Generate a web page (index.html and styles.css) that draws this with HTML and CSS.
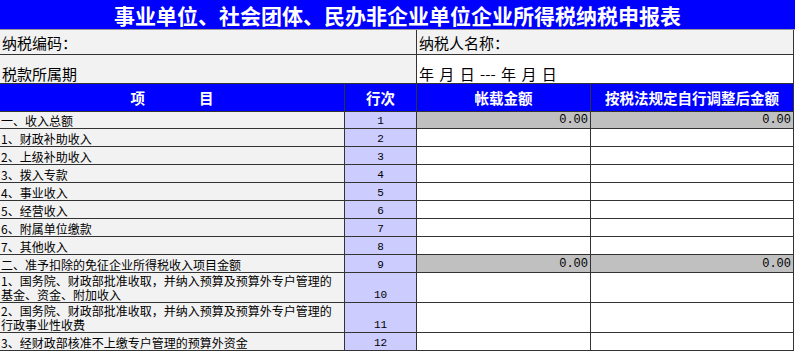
FILE: index.html
```html
<!DOCTYPE html>
<html lang="zh-CN">
<head>
<meta charset="utf-8">
<title>事业单位、社会团体、民办非企业单位企业所得税纳税申报表</title>
<link rel="stylesheet" href="styles.css">
</head>
<body>
<div class="sheet">
  <div class="title">事业单位、社会团体、民办非企业单位企业所得税纳税申报表</div>
  <div class="info info-1">
    <div class="cell shade">纳税编码：</div>
    <div class="cell shade">纳税人名称：</div>
  </div>
  <div class="info info-2">
    <div class="cell shade">税款所属期</div>
    <div class="cell date">年 月 日 --- 年 月 日</div>
  </div>
  <div class="row head">
    <div class="hcell item-head"><span>项</span><span>目</span></div>
    <div class="hcell">行次</div>
    <div class="hcell">帐载金额</div>
    <div class="hcell">按税法规定自行调整后金额</div>
  </div>
  <div class="row r first total">
    <div class="item">一、收入总额</div><div class="num">1</div><div class="amt">0.00</div><div class="amt">0.00</div>
  </div>
  <div class="row r">
    <div class="item">1、财政补助收入</div><div class="num">2</div><div class="amt"></div><div class="amt"></div>
  </div>
  <div class="row r">
    <div class="item">2、上级补助收入</div><div class="num">3</div><div class="amt"></div><div class="amt"></div>
  </div>
  <div class="row r">
    <div class="item">3、拨入专款</div><div class="num">4</div><div class="amt"></div><div class="amt"></div>
  </div>
  <div class="row r">
    <div class="item">4、事业收入</div><div class="num">5</div><div class="amt"></div><div class="amt"></div>
  </div>
  <div class="row r">
    <div class="item">5、经营收入</div><div class="num">6</div><div class="amt"></div><div class="amt"></div>
  </div>
  <div class="row r">
    <div class="item">6、附属单位缴款</div><div class="num">7</div><div class="amt"></div><div class="amt"></div>
  </div>
  <div class="row r">
    <div class="item">7、其他收入</div><div class="num">8</div><div class="amt"></div><div class="amt"></div>
  </div>
  <div class="row r total">
    <div class="item">二、准予扣除的免征企业所得税收入项目金额</div><div class="num">9</div><div class="amt">0.00</div><div class="amt">0.00</div>
  </div>
  <div class="row r tall">
    <div class="item two"><span class="ln">1、国务院、财政部批准收取，并纳入预算及预算外专户管理的</span><span class="ln">基金、资金、附加收入</span></div><div class="num">10</div><div class="amt"></div><div class="amt"></div>
  </div>
  <div class="row r tall">
    <div class="item two"><span class="ln">2、国务院、财政部批准收取，并纳入预算及预算外专户管理的</span><span class="ln">行政事业性收费</span></div><div class="num">11</div><div class="amt"></div><div class="amt"></div>
  </div>
  <div class="row r">
    <div class="item">3、经财政部核准不上缴专户管理的预算外资金</div><div class="num">12</div><div class="amt"></div><div class="amt"></div>
  </div>
</div>
</body>
</html>
```

FILE: styles.css
```css
html, body {
  margin: 0;
  padding: 0;
  background: #ffffff;
}

body {
  font-family: "Noto Sans CJK SC", "Liberation Sans", sans-serif;
  color: #000000;
  overflow: hidden;
}

.sheet {
  width: 794px;
}

.title {
  width: 795px;
  height: 29px;
  border-bottom: 1px solid #9a9a9a;
  background: #0000ff;
  color: #ffffff;
  font-weight: bold;
  font-size: 21px;
  line-height: 31px;
  text-align: center;
  white-space: nowrap;
}

.info {
  display: grid;
  grid-template-columns: 417px 377px;
}

.info .cell {
  box-sizing: border-box;
  border-right: 1px solid #333333;
  border-bottom: 1px solid #333333;
  display: flex;
  align-items: flex-end;
  padding-left: 2px;
  font-size: 15px;
  line-height: 18px;
  white-space: pre;
  background: #ffffff;
}

.info .cell.shade {
  background: #f2f2f2;
}

.info .cell.date {
  word-spacing: 2px;
}

.info-1 .cell {
  height: 25px;
  padding-bottom: 2px;
}

.info-2 .cell {
  height: 29px;
  padding-bottom: 0;
}

.row {
  display: grid;
  grid-template-columns: 345px 72px 174px 203px;
}

.row > div {
  box-sizing: border-box;
  border-right: 1px solid #333333;
  border-bottom: 1px solid #333333;
  display: flex;
  align-items: flex-end;
}

.head > .hcell {
  height: 28px;
  background: #0000ff;
  color: #ffffff;
  font-weight: bold;
  font-size: 14.5px;
  line-height: 16px;
  align-items: center;
  justify-content: center;
  white-space: nowrap;
}

.head > .item-head {
  gap: 54px;
}

.r {
  height: 18px;
}

.r > div {
  height: 18px;
}

.r.first,
.r.first > div {
  height: 17px;
}

.r.tall,
.r.tall > div {
  height: 30px;
}

.item {
  background: #f2f2f2;
  font-size: 12px;
  line-height: 15px;
  padding-left: 1px;
  white-space: nowrap;
}

.item.two {
  flex-direction: column;
  align-items: flex-start;
  justify-content: flex-end;
}

.item.two .ln {
  display: block;
  height: 14px;
  line-height: 14px;
  overflow: visible;
}

.num {
  background: #ccccff;
  justify-content: center;
  font-family: "Liberation Mono", monospace;
  font-size: 11px;
  line-height: 14px;
}

.amt {
  background: #ffffff;
  justify-content: flex-end;
  padding-right: 2px;
  font-family: "Liberation Mono", monospace;
  font-size: 12px;
  line-height: 15px;
}

.total .amt {
  background: #c0c0c0;
}
```
